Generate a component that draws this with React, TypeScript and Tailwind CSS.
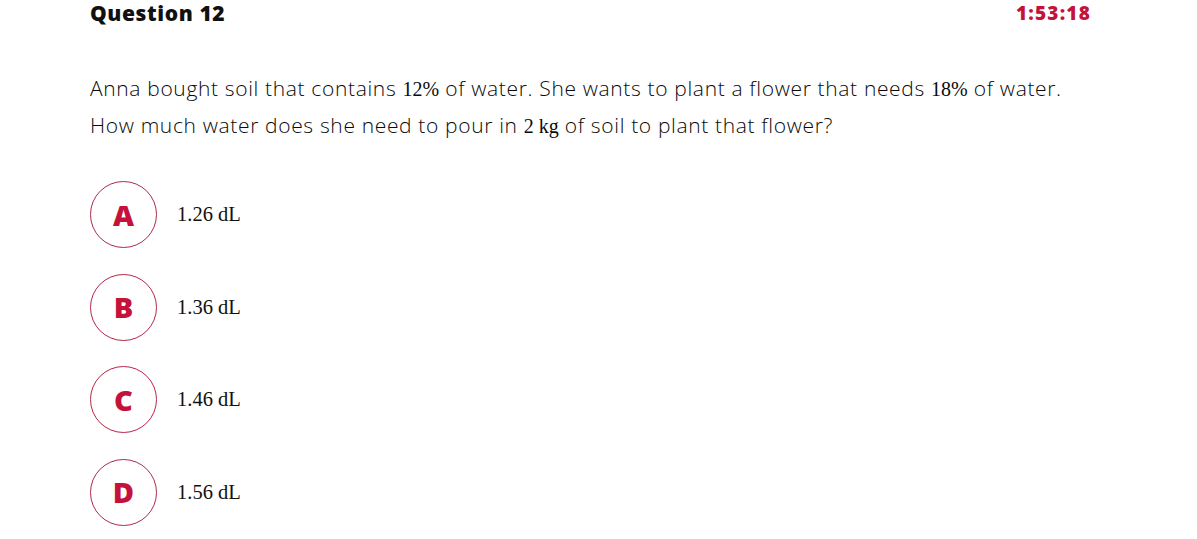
const options = [
  { key: 'A', value: '1.26' },
  { key: 'B', value: '1.36' },
  { key: 'C', value: '1.46' },
  { key: 'D', value: '1.56' },
];

function M({ children }: { children: React.ReactNode }) {
  return <span className="font-['Liberation_Serif',serif] text-[20px] tracking-normal">{children}</span>;
}

export default function App() {
  return (
    <div className="min-h-screen bg-white pl-[90px] pr-[106px] font-['Open_Sans','Noto_Sans',sans-serif] text-[#1a1a1a]">
      <div className="flex items-center justify-between h-[27px]">
        <h1 className="text-[21px] font-extrabold tracking-[0.6px] text-[#111]">Question 12</h1>
        <span className="text-[19px] font-extrabold tracking-[1.2px] text-[#c4123b]">1:53:18</span>
      </div>
      <p className="mt-[43px] text-[21px] leading-[36px] tracking-[0.65px] font-light text-[#0a0a0a]">
        Anna bought soil that contains <M>12%</M> of water. She wants to plant a flower that needs <M>18%</M> of water.
        <br />
        How much water does she need to pour in <M>2 kg</M> of soil to plant that flower?
      </p>
      <div className="mt-[37px] flex flex-col gap-[25.5px]">
        {options.map((o) => (
          <div key={o.key} className="flex items-center gap-[20px]">
            <div className="w-[67px] h-[67px] rounded-full border border-[#b3284a] flex items-center justify-center">
              <span className="text-[29px] font-extrabold text-[#c4123b] font-['Open_Sans',sans-serif]">{o.key}</span>
            </div>
            <span className="font-['Liberation_Serif',serif] text-[20.5px] text-[#111]">{o.value} dL</span>
          </div>
        ))}
      </div>
    </div>
  );
}
